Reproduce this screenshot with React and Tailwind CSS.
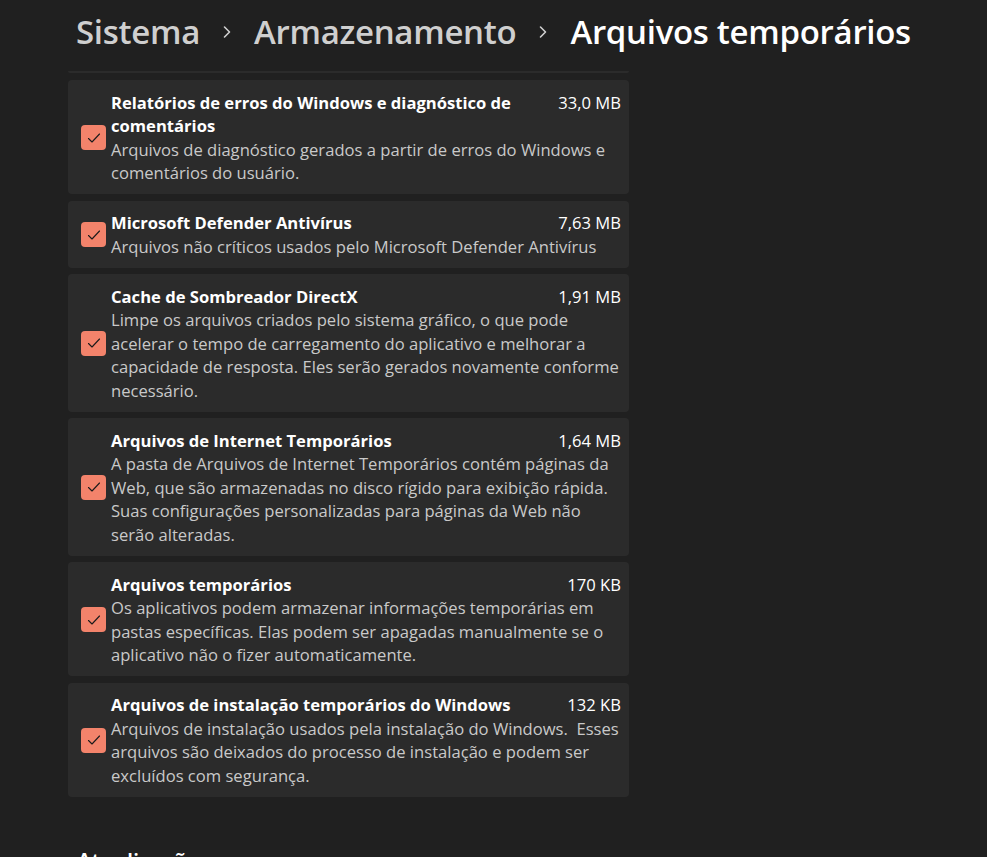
import React from 'react';

const items = [
  {
    title: 'Relatórios de erros do Windows e diagnóstico de comentários',
    size: '33,0 MB',
    desc: 'Arquivos de diagnóstico gerados a partir de erros do Windows e comentários do usuário.',
  },
  {
    title: 'Microsoft Defender Antivírus',
    size: '7,63 MB',
    desc: 'Arquivos não críticos usados pelo Microsoft Defender Antivírus',
  },
  {
    title: 'Cache de Sombreador DirectX',
    size: '1,91 MB',
    desc: 'Limpe os arquivos criados pelo sistema gráfico, o que pode acelerar o tempo de carregamento do aplicativo e melhorar a capacidade de resposta. Eles serão gerados novamente conforme necessário.',
  },
  {
    title: 'Arquivos de Internet Temporários',
    size: '1,64 MB',
    desc: 'A pasta de Arquivos de Internet Temporários contém páginas da Web, que são armazenadas no disco rígido para exibição rápida. Suas configurações personalizadas para páginas da Web não serão alteradas.',
  },
  {
    title: 'Arquivos temporários',
    size: '170 KB',
    desc: 'Os aplicativos podem armazenar informações temporárias em pastas específicas. Elas podem ser apagadas manualmente se o aplicativo não o fizer automaticamente.',
  },
  {
    title: 'Arquivos de instalação temporários do Windows',
    size: '132 KB',
    desc: 'Arquivos de instalação usados pela instalação do Windows.\u00a0 Esses arquivos são deixados do processo de instalação e podem ser excluídos com segurança.',
  },
];

function Chevron() {
  return (
    <svg width="12" height="14" viewBox="0 0 12 14" fill="none" stroke="#d0d0d0" strokeWidth="1.6" strokeLinecap="round" strokeLinejoin="round">
      <path d="M3.5 2l5 5-5 5" />
    </svg>
  );
}

function Checkbox() {
  return (
    <div className="w-[25px] h-[25px] shrink-0 rounded-[4px] bg-[#f3836b] flex items-center justify-center">
      <svg width="18" height="18" viewBox="0 0 18 18" fill="none" stroke="#1a1a1a" strokeWidth="1.1" strokeLinecap="round" strokeLinejoin="round">
        <path d="M3.5 9.5l3.5 3.5 7.5-8" />
      </svg>
    </div>
  );
}

export default function App() {
  return (
    <div
      className="h-[857px] w-[987px] overflow-hidden bg-[#202020] text-white"
      style={{ fontFamily: '"Open Sans", "Noto Sans", sans-serif' }}
    >
      <header className="h-[71px] pb-[7px] pl-[76px] flex items-center gap-[21px] text-[33px] font-semibold tracking-[-0.3px]">
        <span className="text-[#cfcfcf]">Sistema</span>
        <Chevron />
        <span className="text-[#cfcfcf]">Armazenamento</span>
        <Chevron />
        <span className="text-white">Arquivos temporários</span>
      </header>

      <main className="pl-[68px] w-[629px]">
        <div className="h-[2px] rounded-b-[4px] bg-[#2b2b2b]" />
        <div className="mt-[7px] flex flex-col gap-[6.5px]">
          {items.map((it) => (
            <div key={it.title} className="rounded-[4px] bg-[#2b2b2b] flex items-center pl-[13px] pr-[8px] pt-[10.5px] pb-[9.5px]">
              <Checkbox />
              <div className="ml-[5px] flex-1 text-[16.6px] leading-[23.5px]">
                <div className="flex items-start justify-between gap-6">
                  <span className="font-bold text-white max-w-[430px]">{it.title}</span>
                  <span className="text-white whitespace-nowrap">{it.size}</span>
                </div>
                <p className="text-[#c9c9c9]">{it.desc}</p>
              </div>
            </div>
          ))}
        </div>
        <h2 className="mt-[47px] pl-[9px] text-[22px] font-semibold">Atualizações</h2>
      </main>
    </div>
  );
}
